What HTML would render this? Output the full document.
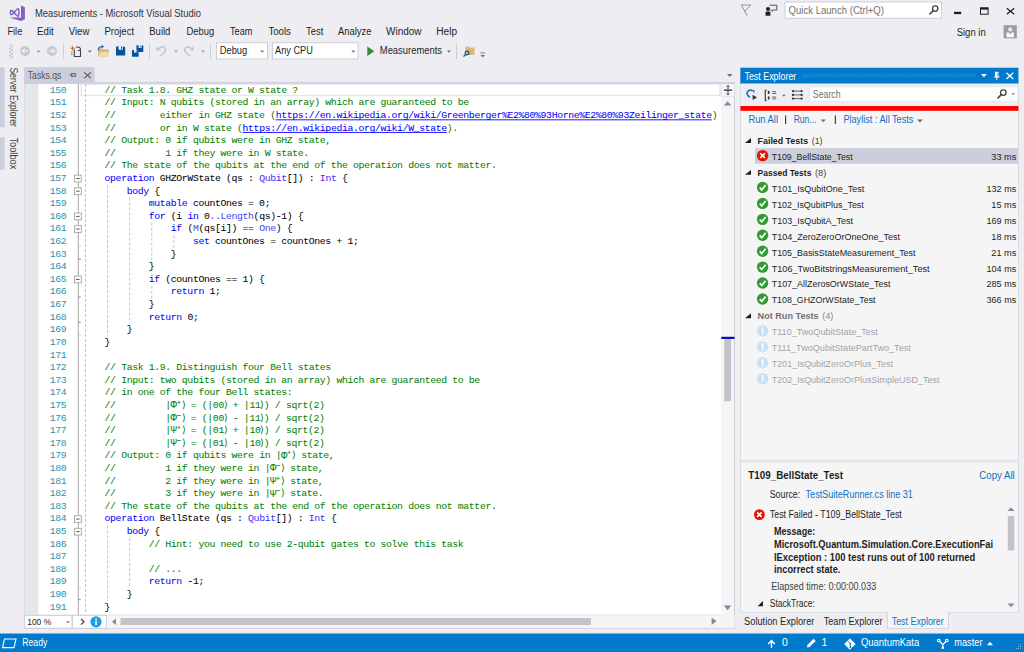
<!DOCTYPE html>
<html><head><meta charset="utf-8"><title>Measurements - Microsoft Visual Studio</title>
<style>
html,body{margin:0;padding:0;width:1024px;height:652px;overflow:hidden;background:#eeeef2;}
svg{position:absolute;left:0;top:0;display:block;font-family:"Liberation Sans",sans-serif;}
</style></head><body>
<svg width="1024" height="652" viewBox="0 0 1024 652">
<path d="M21,5.4 L24.9,7.2 L24.9,19.2 L21,20.9 Z" fill="#865fc5"/>
<path d="M9.4,17.4 L21,17.6 L21,20.9 Z" fill="#865fc5"/>
<path d="M14,12.5 C12.4,10.6 11.3,9.9 10.8,10.4 C10.2,11 10.2,14 10.8,14.6 C11.3,15.1 12.4,14.4 14,12.5 C15.9,10.2 17.3,8.5 18.3,8.8 C19.1,9.1 19.1,15.9 18.3,16.2 C17.3,16.5 15.9,14.8 14,12.5 Z" fill="none" stroke="#865fc5" stroke-width="1.45"/>
<text x="35" y="17.1" font-size="10.15" fill="#333333" textLength="166" lengthAdjust="spacingAndGlyphs">Measurements - Microsoft Visual Studio</text>
<path d="M741.2,5 L751,5 M741.6,5.2 L747,15.6 M750.8,5.2 L744.6,11.4" fill="none" stroke="#8a8a8a" stroke-width="0.9"/>
<g fill="#1e1e1e"><circle cx="768" cy="9" r="2"/><path d="M765.6,15.8 L765.6,12.6 Q765.6,11.4 767,11.4 L769,11.4 Q770.4,11.4 770.4,12.6 L770.4,15.8 Z"/></g>
<path d="M769.6,5.2 L776.8,5.2 L776.8,10 L773.6,10 L772.2,11.4 L772.2,10 L770.4,10" fill="none" stroke="#444444" stroke-width="0.9"/>
<rect x="785" y="2" width="156.4" height="16.3" fill="#ffffff" stroke="#cccedb" stroke-width="1"/>
<text x="788.5" y="13.9" font-size="10.04" fill="#717171" textLength="95.5" lengthAdjust="spacingAndGlyphs">Quick Launch (Ctrl+Q)</text>
<circle cx="935.2" cy="8.6" r="2.7" fill="none" stroke="#424242" stroke-width="1.3"/>
<line x1="933.3" y1="10.6" x2="929.9" y2="14" stroke="#424242" stroke-width="1.6" stroke-linecap="round"/>
<rect x="954" y="11.8" width="7.2" height="2.3" fill="#1e1e1e"/>
<rect x="980.5" y="7.8" width="7.6" height="6.4" fill="none" stroke="#1e1e1e" stroke-width="1"/>
<rect x="980.5" y="7.8" width="7.6" height="1.8" fill="#1e1e1e"/>
<line x1="1006.8" y1="8.2" x2="1014.2" y2="14.2" stroke="#1e1e1e" stroke-width="1.2"/>
<line x1="1014.2" y1="8.2" x2="1006.8" y2="14.2" stroke="#1e1e1e" stroke-width="1.2"/>
<text x="7.4" y="35.3" font-size="10.04" fill="#1e1e1e" textLength="14.9" lengthAdjust="spacingAndGlyphs">File</text>
<text x="37.1" y="35.3" font-size="10.04" fill="#1e1e1e" textLength="16.7" lengthAdjust="spacingAndGlyphs">Edit</text>
<text x="68.7" y="35.3" font-size="10.04" fill="#1e1e1e" textLength="20.7" lengthAdjust="spacingAndGlyphs">View</text>
<text x="104.4" y="35.3" font-size="10.04" fill="#1e1e1e" textLength="29.7" lengthAdjust="spacingAndGlyphs">Project</text>
<text x="149.3" y="35.3" font-size="10.04" fill="#1e1e1e" textLength="21.1" lengthAdjust="spacingAndGlyphs">Build</text>
<text x="186.4" y="35.3" font-size="10.04" fill="#1e1e1e" textLength="27.8" lengthAdjust="spacingAndGlyphs">Debug</text>
<text x="230.0" y="35.3" font-size="10.04" fill="#1e1e1e" textLength="22.5" lengthAdjust="spacingAndGlyphs">Team</text>
<text x="268.4" y="35.3" font-size="10.04" fill="#1e1e1e" textLength="22.5" lengthAdjust="spacingAndGlyphs">Tools</text>
<text x="306.0" y="35.3" font-size="10.04" fill="#1e1e1e" textLength="17.25" lengthAdjust="spacingAndGlyphs">Test</text>
<text x="338.0" y="35.3" font-size="10.04" fill="#1e1e1e" textLength="33.5" lengthAdjust="spacingAndGlyphs">Analyze</text>
<text x="386.0" y="35.3" font-size="10.04" fill="#1e1e1e" textLength="35.5" lengthAdjust="spacingAndGlyphs">Window</text>
<text x="436.25" y="35.3" font-size="10.04" fill="#1e1e1e" textLength="20.75" lengthAdjust="spacingAndGlyphs">Help</text>
<text x="956.7" y="35.9" font-size="10.04" fill="#1e1e1e" textLength="29" lengthAdjust="spacingAndGlyphs">Sign in</text>
<rect x="1003.6" y="25.2" width="13.2" height="13.2" fill="#9d9d9d"/>
<circle cx="1010.2" cy="29.4" r="2.1" fill="#e8e8e8"/>
<path d="M1006.6,37.3 L1006.6,32.6 L1008.7,32.6 L1010.2,34.5 L1011.7,32.6 L1013.8,32.6 L1013.8,37.3 Z" fill="#ffffff"/>
<rect x="9.5" y="44.5" width="1" height="1" fill="#999999"/>
<rect x="11.5" y="45.4" width="1" height="1" fill="#bbbbbb"/>
<rect x="11.5" y="46.3" width="1" height="1" fill="#999999"/>
<rect x="9.5" y="47.199999999999996" width="1" height="1" fill="#bbbbbb"/>
<rect x="9.5" y="48.1" width="1" height="1" fill="#999999"/>
<rect x="11.5" y="49.0" width="1" height="1" fill="#bbbbbb"/>
<rect x="11.5" y="49.9" width="1" height="1" fill="#999999"/>
<rect x="9.5" y="50.8" width="1" height="1" fill="#bbbbbb"/>
<rect x="9.5" y="51.7" width="1" height="1" fill="#999999"/>
<rect x="11.5" y="52.6" width="1" height="1" fill="#bbbbbb"/>
<rect x="11.5" y="53.5" width="1" height="1" fill="#999999"/>
<rect x="9.5" y="54.4" width="1" height="1" fill="#bbbbbb"/>
<rect x="9.5" y="55.3" width="1" height="1" fill="#999999"/>
<rect x="11.5" y="56.2" width="1" height="1" fill="#bbbbbb"/>
<rect x="11.5" y="57.1" width="1" height="1" fill="#999999"/>
<rect x="9.5" y="58.0" width="1" height="1" fill="#bbbbbb"/>
<circle cx="25" cy="51" r="4.9" fill="#c8c8c8"/>
<circle cx="52" cy="51" r="4.9" fill="#c8c8c8"/>
<path d="M28,51 L22.3,51 M24.6,48.7 L22.3,51 L24.6,53.3" fill="none" stroke="#eeeef2" stroke-width="1.3"/>
<path d="M49,51 L54.7,51 M52.4,48.7 L54.7,51 L52.4,53.3" fill="none" stroke="#eeeef2" stroke-width="1.3"/>
<path d="M36.5,50.6 L40.5,50.6 L38.5,52.800000000000004 Z" fill="#999999"/>
<line x1="63.5" y1="44" x2="63.5" y2="59" stroke="#cccedb" stroke-width="1"/>
<path d="M74.3,49.5 L74.3,56.5 L80.5,56.5 L80.5,50.5" fill="none" stroke="#424242" stroke-width="1.1"/>
<path d="M76,47.3 Q80.8,46.2 80.5,50.5 L77.8,50.5" fill="#f0f0f0" stroke="#424242" stroke-width="1.1"/>
<path d="M72.6,45.4 L73.4,47.4 L75.2,48.2 L73.4,49 L72.6,50.9 L71.8,49 L70,48.2 L71.8,47.4 Z" fill="#c27d1a"/>
<rect x="71.4" y="51.5" width="0.9" height="1.3" fill="#424242"/>
<rect x="71.4" y="53.8" width="0.9" height="1.3" fill="#424242"/>
<path d="M87.8,50.6 L91.8,50.6 L89.8,52.800000000000004 Z" fill="#717171"/>
<path d="M98,48.2 L101.5,48.2 L102.5,49.2 L108.8,49.2 L108.8,56.8 L98,56.8 Z" fill="#dcb67a"/>
<path d="M98.2,56.8 L100.2,52 L108.8,52 L108.8,56.8 Z" fill="#f0dcb4"/>
<path d="M98.3,50.3 Q98.3,46.8 102,46.6" fill="none" stroke="#1e72c4" stroke-width="1.4"/>
<path d="M101.6,44.8 L104.2,46.6 L101.6,48.4 Z" fill="#1e72c4"/>
<path d="M116,46.4 L124,46.4 L125.2,47.6 L125.2,55.6 L116,55.6 Z" fill="#00539c"/>
<rect x="118.6" y="46.4" width="4.3" height="3.2" fill="#ffffff"/>
<rect x="121" y="46.9" width="1.2" height="2.1" fill="#00539c"/>
<path d="M136.5,45.2 L142.3,45.2 L143.3,46.2 L143.3,52 L136.5,52 Z" fill="#00539c"/>
<rect x="138.6" y="45.2" width="3.2" height="2.6" fill="#ffffff"/>
<rect x="140.4" y="45.6" width="0.9" height="1.8" fill="#00539c"/>
<path d="M132,50 L137.6,50 L138.6,51 L138.6,56.8 L132,56.8 Z" fill="#00539c"/>
<rect x="134" y="50" width="3.2" height="2.6" fill="#ffffff"/>
<rect x="135.8" y="50.4" width="0.9" height="1.8" fill="#00539c"/>
<line x1="149.5" y1="44" x2="149.5" y2="59" stroke="#cccedb" stroke-width="1"/>
<path d="M158.8,48.6 Q162.5,45.2 165,48.2 Q166.4,50.5 164.2,52.8 L160,56" fill="none" stroke="#c6c6c6" stroke-width="1.5"/>
<path d="M156.4,46.2 L160.9,50.6 L156.4,50.6 Z" fill="#c6c6c6"/>
<path d="M174,50.6 L178,50.6 L176.0,52.800000000000004 Z" fill="#a8a8a8"/>
<path d="M191.4,48.6 Q187.7,45.2 185.2,48.2 Q183.8,50.5 186,52.8 L190.2,56" fill="none" stroke="#c6c6c6" stroke-width="1.5"/>
<path d="M193.8,46.2 L189.3,50.6 L193.8,50.6 Z" fill="#c6c6c6"/>
<path d="M201,50.6 L205,50.6 L203.0,52.800000000000004 Z" fill="#a8a8a8"/>
<line x1="210.5" y1="44" x2="210.5" y2="59" stroke="#cccedb" stroke-width="1"/>
<rect x="216.5" y="42.7" width="51" height="16.3" fill="#ffffff" stroke="#cccedb" stroke-width="1"/>
<text x="219.7" y="54.4" font-size="10.04" fill="#1e1e1e" textLength="27.6" lengthAdjust="spacingAndGlyphs">Debug</text>
<path d="M260.2,50.6 L264.2,50.6 L262.2,52.800000000000004 Z" fill="#717171"/>
<rect x="272.5" y="42.7" width="85.5" height="16.3" fill="#ffffff" stroke="#cccedb" stroke-width="1"/>
<text x="275.1" y="54.4" font-size="10.04" fill="#1e1e1e" textLength="37.7" lengthAdjust="spacingAndGlyphs">Any CPU</text>
<path d="M351.3,50.6 L355.3,50.6 L353.3,52.800000000000004 Z" fill="#717171"/>
<path d="M367.3,46.5 L374.3,51.2 L367.3,55.9 Z" fill="#388a34"/>
<text x="379.8" y="54.4" font-size="10.04" fill="#1e1e1e" textLength="62.2" lengthAdjust="spacingAndGlyphs">Measurements</text>
<path d="M447,50.6 L451,50.6 L449.0,52.800000000000004 Z" fill="#717171"/>
<line x1="456.5" y1="44" x2="456.5" y2="59" stroke="#cccedb" stroke-width="1"/>
<path d="M465.5,46.5 L469,46.5 L470,47.5 L474.5,47.5 L474.5,55 L465.5,55 Z" fill="#dcb67a"/>
<circle cx="467" cy="53" r="1.9" fill="none" stroke="#00539c" stroke-width="1.1"/>
<line x1="465.6" y1="54.5" x2="463.5" y2="56.6" stroke="#00539c" stroke-width="1.3"/>
<line x1="480.5" y1="52.9" x2="485" y2="52.9" stroke="#717171" stroke-width="0.9"/>
<path d="M480.5,55 L485.0,55 L482.75,57.5 Z" fill="#717171"/>
<rect x="0" y="67.4" width="4.7" height="59.8" fill="#cccedb"/>
<rect x="0" y="137.3" width="4.7" height="32.3" fill="#cccedb"/>
<text transform="translate(10.2,67.4) rotate(90)" font-size="10" fill="#444444" textLength="59.5" lengthAdjust="spacingAndGlyphs">Server Explorer</text>
<text transform="translate(10.2,137.4) rotate(90)" font-size="10" fill="#444444" textLength="32" lengthAdjust="spacingAndGlyphs">Toolbox</text>
<rect x="24.1" y="67.1" width="70.5" height="17" fill="#cccedb"/>
<rect x="24.1" y="82" width="711" height="2" fill="#cccedb"/>
<text x="27.8" y="78.6" font-size="10.04" fill="#555555" textLength="33.6" lengthAdjust="spacingAndGlyphs">Tasks.qs</text>
<path d="M69.2,75 L71.5,75 M71.7,72.9 L71.7,77.1 M71.7,73.7 L75.6,73.7 L75.6,76.3 L71.7,76.3" fill="none" stroke="#555555" stroke-width="0.9"/>
<line x1="84.2" y1="72.4" x2="90.9" y2="78.2" stroke="#555555" stroke-width="1.1"/>
<line x1="90.9" y1="72.4" x2="84.2" y2="78.2" stroke="#555555" stroke-width="1.1"/>
<path d="M727,73.9 L732.5,73.9 L729.75,76.9 Z" fill="#717171"/>
<rect x="24.1" y="84" width="710.9" height="544.4" fill="#ffffff"/>
<rect x="24.1" y="84" width="14.4" height="531" fill="#e6e7e8"/>
<rect x="24.1" y="84" width="0.9" height="531" fill="#d6d7e1"/>
<rect x="81.2" y="84.2" width="638.8" height="11.3" fill="none" stroke="#e5e5ea" stroke-width="1.4"/>
<line x1="78.3" y1="84" x2="78.3" y2="615" stroke="#a5a5a5" stroke-width="1"/>
<line x1="85.5" y1="84.0" x2="85.5" y2="613.62" stroke="#c4c4c4" stroke-width="1" stroke-dasharray="3,2"/>
<line x1="107.58" y1="184.88" x2="107.58" y2="336.2" stroke="#c4c4c4" stroke-width="1" stroke-dasharray="3,2"/>
<line x1="129.66" y1="197.49" x2="129.66" y2="323.59000000000003" stroke="#c4c4c4" stroke-width="1" stroke-dasharray="3,2"/>
<line x1="151.74" y1="222.70999999999998" x2="151.74" y2="260.54" stroke="#c4c4c4" stroke-width="1" stroke-dasharray="3,2"/>
<line x1="173.82" y1="235.32" x2="173.82" y2="247.93" stroke="#c4c4c4" stroke-width="1" stroke-dasharray="3,2"/>
<line x1="151.74" y1="285.76" x2="151.74" y2="298.37" stroke="#c4c4c4" stroke-width="1" stroke-dasharray="3,2"/>
<line x1="107.58" y1="525.3499999999999" x2="107.58" y2="601.01" stroke="#c4c4c4" stroke-width="1" stroke-dasharray="3,2"/>
<line x1="129.66" y1="537.9599999999999" x2="129.66" y2="588.4" stroke="#c4c4c4" stroke-width="1" stroke-dasharray="3,2"/>
<rect x="74.5" y="175.175" width="6.8" height="6.8" fill="#ffffff" stroke="#a5a5a5" stroke-width="0.9"/>
<line x1="76.2" y1="178.57500000000002" x2="79.6" y2="178.57500000000002" stroke="#424242" stroke-width="0.9"/>
<rect x="74.5" y="187.785" width="6.8" height="6.8" fill="#ffffff" stroke="#a5a5a5" stroke-width="0.9"/>
<line x1="76.2" y1="191.185" x2="79.6" y2="191.185" stroke="#424242" stroke-width="0.9"/>
<rect x="74.5" y="213.00500000000002" width="6.8" height="6.8" fill="#ffffff" stroke="#a5a5a5" stroke-width="0.9"/>
<line x1="76.2" y1="216.40500000000003" x2="79.6" y2="216.40500000000003" stroke="#424242" stroke-width="0.9"/>
<rect x="74.5" y="225.61499999999998" width="6.8" height="6.8" fill="#ffffff" stroke="#a5a5a5" stroke-width="0.9"/>
<line x1="76.2" y1="229.015" x2="79.6" y2="229.015" stroke="#424242" stroke-width="0.9"/>
<rect x="74.5" y="276.055" width="6.8" height="6.8" fill="#ffffff" stroke="#a5a5a5" stroke-width="0.9"/>
<line x1="76.2" y1="279.455" x2="79.6" y2="279.455" stroke="#424242" stroke-width="0.9"/>
<rect x="74.5" y="515.645" width="6.8" height="6.8" fill="#ffffff" stroke="#a5a5a5" stroke-width="0.9"/>
<line x1="76.2" y1="519.045" x2="79.6" y2="519.045" stroke="#424242" stroke-width="0.9"/>
<rect x="74.5" y="528.2549999999999" width="6.8" height="6.8" fill="#ffffff" stroke="#a5a5a5" stroke-width="0.9"/>
<line x1="76.2" y1="531.6549999999999" x2="79.6" y2="531.6549999999999" stroke="#424242" stroke-width="0.9"/>
<line x1="78.3" y1="246.63" x2="80.8" y2="246.63" stroke="#c8c8c8" stroke-width="1"/>
<line x1="78.3" y1="259.24" x2="80.8" y2="259.24" stroke="#888888" stroke-width="1"/>
<line x1="78.3" y1="297.07" x2="80.8" y2="297.07" stroke="#888888" stroke-width="1"/>
<line x1="78.3" y1="322.28999999999996" x2="80.8" y2="322.28999999999996" stroke="#888888" stroke-width="1"/>
<line x1="78.3" y1="334.9" x2="80.8" y2="334.9" stroke="#c8c8c8" stroke-width="1"/>
<line x1="78.3" y1="587.1" x2="80.8" y2="587.1" stroke="#c8c8c8" stroke-width="1"/>
<line x1="78.3" y1="599.71" x2="80.8" y2="599.71" stroke="#888888" stroke-width="1"/>
<g font-family="Liberation Mono" font-size="9.8" letter-spacing="-0.360" fill="#2b91af">
<text x="49.84" y="92.70">150</text>
<text x="49.84" y="105.31">151</text>
<text x="49.84" y="117.92">152</text>
<text x="49.84" y="130.53">153</text>
<text x="49.84" y="143.14">154</text>
<text x="49.84" y="155.75">155</text>
<text x="49.84" y="168.36">156</text>
<text x="49.84" y="180.97">157</text>
<text x="49.84" y="193.58">158</text>
<text x="49.84" y="206.19">159</text>
<text x="49.84" y="218.80">160</text>
<text x="49.84" y="231.41">161</text>
<text x="49.84" y="244.02">162</text>
<text x="49.84" y="256.63">163</text>
<text x="49.84" y="269.24">164</text>
<text x="49.84" y="281.85">165</text>
<text x="49.84" y="294.46">166</text>
<text x="49.84" y="307.07">167</text>
<text x="49.84" y="319.68">168</text>
<text x="49.84" y="332.29">169</text>
<text x="49.84" y="344.90">170</text>
<text x="49.84" y="357.51">171</text>
<text x="49.84" y="370.12">172</text>
<text x="49.84" y="382.73">173</text>
<text x="49.84" y="395.34">174</text>
<text x="49.84" y="407.95">175</text>
<text x="49.84" y="420.56">176</text>
<text x="49.84" y="433.17">177</text>
<text x="49.84" y="445.78">178</text>
<text x="49.84" y="458.39">179</text>
<text x="49.84" y="471.00">180</text>
<text x="49.84" y="483.61">181</text>
<text x="49.84" y="496.22">182</text>
<text x="49.84" y="508.83">183</text>
<text x="49.84" y="521.44">184</text>
<text x="49.84" y="534.05">185</text>
<text x="49.84" y="546.66">186</text>
<text x="49.84" y="559.27">187</text>
<text x="49.84" y="571.88">188</text>
<text x="49.84" y="584.49">189</text>
<text x="49.84" y="597.10">190</text>
<text x="49.84" y="609.71">191</text>
</g>
<g font-family="Liberation Mono" font-size="9.8" letter-spacing="-0.360" stroke-width="0.04" style="paint-order:stroke">
<text y="92.70"><tspan x="104.58" fill="#008000" stroke="#008000" xml:space="preserve">// Task 1.8. GHZ state or W state ?</tspan></text>
<text y="105.31"><tspan x="104.58" fill="#008000" stroke="#008000" xml:space="preserve">// Input: N qubits (stored in an array) which are guaranteed to be</tspan></text>
<text y="117.92"><tspan x="104.58" fill="#008000" stroke="#008000" xml:space="preserve">//        either in GHZ state (</tspan><tspan x="275.70" fill="#0000ff" stroke="#0000ff" xml:space="preserve">https://en.wikipedia.org/wiki/Greenberger%E2%80%93Horne%E2%80%93Zeilinger_state</tspan><tspan x="711.78" fill="#008000" stroke="#008000" xml:space="preserve">)</tspan></text>
<text y="130.53"><tspan x="104.58" fill="#008000" stroke="#008000" xml:space="preserve">//        or in W state (</tspan><tspan x="242.58" fill="#0000ff" stroke="#0000ff" xml:space="preserve">https://en.wikipedia.org/wiki/W_state</tspan><tspan x="446.82" fill="#008000" stroke="#008000" xml:space="preserve">).</tspan></text>
<text y="143.14"><tspan x="104.58" fill="#008000" stroke="#008000" xml:space="preserve">// Output: 0 if qubits were in GHZ state,</tspan></text>
<text y="155.75"><tspan x="104.58" fill="#008000" stroke="#008000" xml:space="preserve">//         1 if they were in W state.</tspan></text>
<text y="168.36"><tspan x="104.58" fill="#008000" stroke="#008000" xml:space="preserve">// The state of the qubits at the end of the operation does not matter.</tspan></text>
<text y="180.97"><tspan x="104.58" fill="#0000ff" stroke="#0000ff" xml:space="preserve">operation</tspan><tspan x="159.78" fill="#000000" stroke="#000000" xml:space="preserve">GHZOrWState (qs : </tspan><tspan x="259.14" fill="#4a2ef5" stroke="#4a2ef5" xml:space="preserve">Qubit</tspan><tspan x="286.74" fill="#000000" stroke="#000000" xml:space="preserve">[]) : </tspan><tspan x="319.86" fill="#4a2ef5" stroke="#4a2ef5" xml:space="preserve">Int</tspan><tspan x="341.94" fill="#000000" stroke="#000000" xml:space="preserve">{</tspan></text>
<text y="193.58"><tspan x="126.66" fill="#0000ff" stroke="#0000ff" xml:space="preserve">body</tspan><tspan x="154.26" fill="#000000" stroke="#000000" xml:space="preserve">{</tspan></text>
<text y="206.19"><tspan x="148.74" fill="#0000ff" stroke="#0000ff" xml:space="preserve">mutable</tspan><tspan x="192.90" fill="#000000" stroke="#000000" xml:space="preserve">countOnes = 0;</tspan></text>
<text y="218.80"><tspan x="148.74" fill="#0000ff" stroke="#0000ff" xml:space="preserve">for</tspan><tspan x="170.82" fill="#000000" stroke="#000000" xml:space="preserve">(i </tspan><tspan x="187.38" fill="#0000ff" stroke="#0000ff" xml:space="preserve">in</tspan><tspan x="203.94" fill="#000000" stroke="#000000" xml:space="preserve">0</tspan><tspan x="209.46" fill="#4545f0" stroke="#4545f0" xml:space="preserve">..</tspan><tspan x="220.50" fill="#4545f0" stroke="#4545f0" xml:space="preserve">Length</tspan><tspan x="253.62" fill="#000000" stroke="#000000" xml:space="preserve">(qs)-1) {</tspan></text>
<text y="231.41"><tspan x="170.82" fill="#0000ff" stroke="#0000ff" xml:space="preserve">if</tspan><tspan x="187.38" fill="#000000" stroke="#000000" xml:space="preserve">(</tspan><tspan x="192.90" fill="#4545f0" stroke="#4545f0" xml:space="preserve">M</tspan><tspan x="198.42" fill="#000000" stroke="#000000" xml:space="preserve">(qs[i]) == </tspan><tspan x="259.14" fill="#4545f0" stroke="#4545f0" xml:space="preserve">One</tspan><tspan x="275.70" fill="#000000" stroke="#000000" xml:space="preserve">) {</tspan></text>
<text y="244.02"><tspan x="192.90" fill="#0000ff" stroke="#0000ff" xml:space="preserve">set</tspan><tspan x="214.98" fill="#000000" stroke="#000000" xml:space="preserve">countOnes = countOnes + 1;</tspan></text>
<text y="256.63"><tspan x="170.82" fill="#000000" stroke="#000000" xml:space="preserve">}</tspan></text>
<text y="269.24"><tspan x="148.74" fill="#000000" stroke="#000000" xml:space="preserve">}</tspan></text>
<text y="281.85"><tspan x="148.74" fill="#0000ff" stroke="#0000ff" xml:space="preserve">if</tspan><tspan x="165.30" fill="#000000" stroke="#000000" xml:space="preserve">(countOnes == 1) {</tspan></text>
<text y="294.46"><tspan x="170.82" fill="#0000ff" stroke="#0000ff" xml:space="preserve">return</tspan><tspan x="209.46" fill="#000000" stroke="#000000" xml:space="preserve">1;</tspan></text>
<text y="307.07"><tspan x="148.74" fill="#000000" stroke="#000000" xml:space="preserve">}</tspan></text>
<text y="319.68"><tspan x="148.74" fill="#0000ff" stroke="#0000ff" xml:space="preserve">return</tspan><tspan x="187.38" fill="#000000" stroke="#000000" xml:space="preserve">0;</tspan></text>
<text y="332.29"><tspan x="126.66" fill="#000000" stroke="#000000" xml:space="preserve">}</tspan></text>
<text y="344.90"><tspan x="104.58" fill="#000000" stroke="#000000" xml:space="preserve">}</tspan></text>
<text y="357.51"></text>
<text y="370.12"><tspan x="104.58" fill="#008000" stroke="#008000" xml:space="preserve">// Task 1.9. Distinguish four Bell states</tspan></text>
<text y="382.73"><tspan x="104.58" fill="#008000" stroke="#008000" xml:space="preserve">// Input: two qubits (stored in an array) which are guaranteed to be</tspan></text>
<text y="395.34"><tspan x="104.58" fill="#008000" stroke="#008000" xml:space="preserve">// in one of the four Bell states:</tspan></text>
<text y="407.95"><tspan x="104.58" y="407.95" fill="#008000" stroke="#008000">/</tspan><tspan x="110.10" y="407.95" fill="#008000" stroke="#008000">/</tspan><tspan x="165.30" y="407.95" fill="#008000" stroke="#008000">|</tspan><tspan x="170.62" y="408.25" font-size="10.6" fill="#008000" stroke="#008000">Φ</tspan><tspan x="176.64" y="404.95" font-size="7.2" fill="#008000" stroke="#008000">+</tspan><tspan x="181.86" y="407.95" fill="#008000" stroke="#008000">⟩</tspan><tspan x="190.78" y="407.95" fill="#008000" stroke="#008000">=</tspan><tspan x="201.82" y="407.95" fill="#008000" stroke="#008000">(</tspan><tspan x="207.34" y="407.95" fill="#008000" stroke="#008000">|</tspan><tspan x="212.86" y="407.95" fill="#008000" stroke="#008000">0</tspan><tspan x="218.38" y="407.95" fill="#008000" stroke="#008000">0</tspan><tspan x="223.90" y="407.95" fill="#008000" stroke="#008000">⟩</tspan><tspan x="232.82" y="407.95" fill="#008000" stroke="#008000">+</tspan><tspan x="243.86" y="407.95" fill="#008000" stroke="#008000">|</tspan><tspan x="249.38" y="407.95" fill="#008000" stroke="#008000">1</tspan><tspan x="254.90" y="407.95" fill="#008000" stroke="#008000">1</tspan><tspan x="260.42" y="407.95" fill="#008000" stroke="#008000">⟩</tspan><tspan x="263.82" y="407.95" fill="#008000" stroke="#008000">)</tspan><tspan x="274.86" y="407.95" fill="#008000" stroke="#008000">/</tspan><tspan x="285.90" y="407.95" fill="#008000" stroke="#008000">s</tspan><tspan x="291.42" y="407.95" fill="#008000" stroke="#008000">q</tspan><tspan x="296.94" y="407.95" fill="#008000" stroke="#008000">r</tspan><tspan x="302.46" y="407.95" fill="#008000" stroke="#008000">t</tspan><tspan x="307.98" y="407.95" fill="#008000" stroke="#008000">(</tspan><tspan x="313.50" y="407.95" fill="#008000" stroke="#008000">2</tspan><tspan x="319.02" y="407.95" fill="#008000" stroke="#008000">)</tspan></text>
<text y="420.56"><tspan x="104.58" y="420.56" fill="#008000" stroke="#008000">/</tspan><tspan x="110.10" y="420.56" fill="#008000" stroke="#008000">/</tspan><tspan x="165.30" y="420.56" fill="#008000" stroke="#008000">|</tspan><tspan x="170.62" y="420.86" font-size="10.6" fill="#008000" stroke="#008000">Φ</tspan><tspan x="176.64" y="417.56" font-size="7.2" fill="#008000" stroke="#008000">−</tspan><tspan x="181.86" y="420.56" fill="#008000" stroke="#008000">⟩</tspan><tspan x="190.78" y="420.56" fill="#008000" stroke="#008000">=</tspan><tspan x="201.82" y="420.56" fill="#008000" stroke="#008000">(</tspan><tspan x="207.34" y="420.56" fill="#008000" stroke="#008000">|</tspan><tspan x="212.86" y="420.56" fill="#008000" stroke="#008000">0</tspan><tspan x="218.38" y="420.56" fill="#008000" stroke="#008000">0</tspan><tspan x="223.90" y="420.56" fill="#008000" stroke="#008000">⟩</tspan><tspan x="232.82" y="420.56" fill="#008000" stroke="#008000">-</tspan><tspan x="243.86" y="420.56" fill="#008000" stroke="#008000">|</tspan><tspan x="249.38" y="420.56" fill="#008000" stroke="#008000">1</tspan><tspan x="254.90" y="420.56" fill="#008000" stroke="#008000">1</tspan><tspan x="260.42" y="420.56" fill="#008000" stroke="#008000">⟩</tspan><tspan x="263.82" y="420.56" fill="#008000" stroke="#008000">)</tspan><tspan x="274.86" y="420.56" fill="#008000" stroke="#008000">/</tspan><tspan x="285.90" y="420.56" fill="#008000" stroke="#008000">s</tspan><tspan x="291.42" y="420.56" fill="#008000" stroke="#008000">q</tspan><tspan x="296.94" y="420.56" fill="#008000" stroke="#008000">r</tspan><tspan x="302.46" y="420.56" fill="#008000" stroke="#008000">t</tspan><tspan x="307.98" y="420.56" fill="#008000" stroke="#008000">(</tspan><tspan x="313.50" y="420.56" fill="#008000" stroke="#008000">2</tspan><tspan x="319.02" y="420.56" fill="#008000" stroke="#008000">)</tspan></text>
<text y="433.17"><tspan x="104.58" y="433.17" fill="#008000" stroke="#008000">/</tspan><tspan x="110.10" y="433.17" fill="#008000" stroke="#008000">/</tspan><tspan x="165.30" y="433.17" fill="#008000" stroke="#008000">|</tspan><tspan x="170.62" y="433.47" font-size="10.6" fill="#008000" stroke="#008000">Ψ</tspan><tspan x="176.64" y="430.17" font-size="7.2" fill="#008000" stroke="#008000">+</tspan><tspan x="181.86" y="433.17" fill="#008000" stroke="#008000">⟩</tspan><tspan x="190.78" y="433.17" fill="#008000" stroke="#008000">=</tspan><tspan x="201.82" y="433.17" fill="#008000" stroke="#008000">(</tspan><tspan x="207.34" y="433.17" fill="#008000" stroke="#008000">|</tspan><tspan x="212.86" y="433.17" fill="#008000" stroke="#008000">0</tspan><tspan x="218.38" y="433.17" fill="#008000" stroke="#008000">1</tspan><tspan x="223.90" y="433.17" fill="#008000" stroke="#008000">⟩</tspan><tspan x="232.82" y="433.17" fill="#008000" stroke="#008000">+</tspan><tspan x="243.86" y="433.17" fill="#008000" stroke="#008000">|</tspan><tspan x="249.38" y="433.17" fill="#008000" stroke="#008000">1</tspan><tspan x="254.90" y="433.17" fill="#008000" stroke="#008000">0</tspan><tspan x="260.42" y="433.17" fill="#008000" stroke="#008000">⟩</tspan><tspan x="263.82" y="433.17" fill="#008000" stroke="#008000">)</tspan><tspan x="274.86" y="433.17" fill="#008000" stroke="#008000">/</tspan><tspan x="285.90" y="433.17" fill="#008000" stroke="#008000">s</tspan><tspan x="291.42" y="433.17" fill="#008000" stroke="#008000">q</tspan><tspan x="296.94" y="433.17" fill="#008000" stroke="#008000">r</tspan><tspan x="302.46" y="433.17" fill="#008000" stroke="#008000">t</tspan><tspan x="307.98" y="433.17" fill="#008000" stroke="#008000">(</tspan><tspan x="313.50" y="433.17" fill="#008000" stroke="#008000">2</tspan><tspan x="319.02" y="433.17" fill="#008000" stroke="#008000">)</tspan></text>
<text y="445.78"><tspan x="104.58" y="445.78" fill="#008000" stroke="#008000">/</tspan><tspan x="110.10" y="445.78" fill="#008000" stroke="#008000">/</tspan><tspan x="165.30" y="445.78" fill="#008000" stroke="#008000">|</tspan><tspan x="170.62" y="446.08" font-size="10.6" fill="#008000" stroke="#008000">Ψ</tspan><tspan x="176.64" y="442.78" font-size="7.2" fill="#008000" stroke="#008000">−</tspan><tspan x="181.86" y="445.78" fill="#008000" stroke="#008000">⟩</tspan><tspan x="190.78" y="445.78" fill="#008000" stroke="#008000">=</tspan><tspan x="201.82" y="445.78" fill="#008000" stroke="#008000">(</tspan><tspan x="207.34" y="445.78" fill="#008000" stroke="#008000">|</tspan><tspan x="212.86" y="445.78" fill="#008000" stroke="#008000">0</tspan><tspan x="218.38" y="445.78" fill="#008000" stroke="#008000">1</tspan><tspan x="223.90" y="445.78" fill="#008000" stroke="#008000">⟩</tspan><tspan x="232.82" y="445.78" fill="#008000" stroke="#008000">-</tspan><tspan x="243.86" y="445.78" fill="#008000" stroke="#008000">|</tspan><tspan x="249.38" y="445.78" fill="#008000" stroke="#008000">1</tspan><tspan x="254.90" y="445.78" fill="#008000" stroke="#008000">0</tspan><tspan x="260.42" y="445.78" fill="#008000" stroke="#008000">⟩</tspan><tspan x="263.82" y="445.78" fill="#008000" stroke="#008000">)</tspan><tspan x="274.86" y="445.78" fill="#008000" stroke="#008000">/</tspan><tspan x="285.90" y="445.78" fill="#008000" stroke="#008000">s</tspan><tspan x="291.42" y="445.78" fill="#008000" stroke="#008000">q</tspan><tspan x="296.94" y="445.78" fill="#008000" stroke="#008000">r</tspan><tspan x="302.46" y="445.78" fill="#008000" stroke="#008000">t</tspan><tspan x="307.98" y="445.78" fill="#008000" stroke="#008000">(</tspan><tspan x="313.50" y="445.78" fill="#008000" stroke="#008000">2</tspan><tspan x="319.02" y="445.78" fill="#008000" stroke="#008000">)</tspan></text>
<text y="458.39"><tspan x="104.58" y="458.39" fill="#008000" stroke="#008000">/</tspan><tspan x="110.10" y="458.39" fill="#008000" stroke="#008000">/</tspan><tspan x="121.14" y="458.39" fill="#008000" stroke="#008000">O</tspan><tspan x="126.66" y="458.39" fill="#008000" stroke="#008000">u</tspan><tspan x="132.18" y="458.39" fill="#008000" stroke="#008000">t</tspan><tspan x="137.70" y="458.39" fill="#008000" stroke="#008000">p</tspan><tspan x="143.22" y="458.39" fill="#008000" stroke="#008000">u</tspan><tspan x="148.74" y="458.39" fill="#008000" stroke="#008000">t</tspan><tspan x="154.26" y="458.39" fill="#008000" stroke="#008000">:</tspan><tspan x="165.30" y="458.39" fill="#008000" stroke="#008000">0</tspan><tspan x="176.34" y="458.39" fill="#008000" stroke="#008000">i</tspan><tspan x="181.86" y="458.39" fill="#008000" stroke="#008000">f</tspan><tspan x="192.90" y="458.39" fill="#008000" stroke="#008000">q</tspan><tspan x="198.42" y="458.39" fill="#008000" stroke="#008000">u</tspan><tspan x="203.94" y="458.39" fill="#008000" stroke="#008000">b</tspan><tspan x="209.46" y="458.39" fill="#008000" stroke="#008000">i</tspan><tspan x="214.98" y="458.39" fill="#008000" stroke="#008000">t</tspan><tspan x="220.50" y="458.39" fill="#008000" stroke="#008000">s</tspan><tspan x="231.54" y="458.39" fill="#008000" stroke="#008000">w</tspan><tspan x="237.06" y="458.39" fill="#008000" stroke="#008000">e</tspan><tspan x="242.58" y="458.39" fill="#008000" stroke="#008000">r</tspan><tspan x="248.10" y="458.39" fill="#008000" stroke="#008000">e</tspan><tspan x="259.14" y="458.39" fill="#008000" stroke="#008000">i</tspan><tspan x="264.66" y="458.39" fill="#008000" stroke="#008000">n</tspan><tspan x="275.70" y="458.39" fill="#008000" stroke="#008000">|</tspan><tspan x="281.02" y="458.69" font-size="10.6" fill="#008000" stroke="#008000">Φ</tspan><tspan x="287.04" y="455.39" font-size="7.2" fill="#008000" stroke="#008000">+</tspan><tspan x="292.26" y="458.39" fill="#008000" stroke="#008000">⟩</tspan><tspan x="301.18" y="458.39" fill="#008000" stroke="#008000">s</tspan><tspan x="306.70" y="458.39" fill="#008000" stroke="#008000">t</tspan><tspan x="312.22" y="458.39" fill="#008000" stroke="#008000">a</tspan><tspan x="317.74" y="458.39" fill="#008000" stroke="#008000">t</tspan><tspan x="323.26" y="458.39" fill="#008000" stroke="#008000">e</tspan><tspan x="328.78" y="458.39" fill="#008000" stroke="#008000">,</tspan></text>
<text y="471.00"><tspan x="104.58" y="471.00" fill="#008000" stroke="#008000">/</tspan><tspan x="110.10" y="471.00" fill="#008000" stroke="#008000">/</tspan><tspan x="165.30" y="471.00" fill="#008000" stroke="#008000">1</tspan><tspan x="176.34" y="471.00" fill="#008000" stroke="#008000">i</tspan><tspan x="181.86" y="471.00" fill="#008000" stroke="#008000">f</tspan><tspan x="192.90" y="471.00" fill="#008000" stroke="#008000">t</tspan><tspan x="198.42" y="471.00" fill="#008000" stroke="#008000">h</tspan><tspan x="203.94" y="471.00" fill="#008000" stroke="#008000">e</tspan><tspan x="209.46" y="471.00" fill="#008000" stroke="#008000">y</tspan><tspan x="220.50" y="471.00" fill="#008000" stroke="#008000">w</tspan><tspan x="226.02" y="471.00" fill="#008000" stroke="#008000">e</tspan><tspan x="231.54" y="471.00" fill="#008000" stroke="#008000">r</tspan><tspan x="237.06" y="471.00" fill="#008000" stroke="#008000">e</tspan><tspan x="248.10" y="471.00" fill="#008000" stroke="#008000">i</tspan><tspan x="253.62" y="471.00" fill="#008000" stroke="#008000">n</tspan><tspan x="264.66" y="471.00" fill="#008000" stroke="#008000">|</tspan><tspan x="269.98" y="471.30" font-size="10.6" fill="#008000" stroke="#008000">Φ</tspan><tspan x="276.00" y="468.00" font-size="7.2" fill="#008000" stroke="#008000">−</tspan><tspan x="281.22" y="471.00" fill="#008000" stroke="#008000">⟩</tspan><tspan x="290.14" y="471.00" fill="#008000" stroke="#008000">s</tspan><tspan x="295.66" y="471.00" fill="#008000" stroke="#008000">t</tspan><tspan x="301.18" y="471.00" fill="#008000" stroke="#008000">a</tspan><tspan x="306.70" y="471.00" fill="#008000" stroke="#008000">t</tspan><tspan x="312.22" y="471.00" fill="#008000" stroke="#008000">e</tspan><tspan x="317.74" y="471.00" fill="#008000" stroke="#008000">,</tspan></text>
<text y="483.61"><tspan x="104.58" y="483.61" fill="#008000" stroke="#008000">/</tspan><tspan x="110.10" y="483.61" fill="#008000" stroke="#008000">/</tspan><tspan x="165.30" y="483.61" fill="#008000" stroke="#008000">2</tspan><tspan x="176.34" y="483.61" fill="#008000" stroke="#008000">i</tspan><tspan x="181.86" y="483.61" fill="#008000" stroke="#008000">f</tspan><tspan x="192.90" y="483.61" fill="#008000" stroke="#008000">t</tspan><tspan x="198.42" y="483.61" fill="#008000" stroke="#008000">h</tspan><tspan x="203.94" y="483.61" fill="#008000" stroke="#008000">e</tspan><tspan x="209.46" y="483.61" fill="#008000" stroke="#008000">y</tspan><tspan x="220.50" y="483.61" fill="#008000" stroke="#008000">w</tspan><tspan x="226.02" y="483.61" fill="#008000" stroke="#008000">e</tspan><tspan x="231.54" y="483.61" fill="#008000" stroke="#008000">r</tspan><tspan x="237.06" y="483.61" fill="#008000" stroke="#008000">e</tspan><tspan x="248.10" y="483.61" fill="#008000" stroke="#008000">i</tspan><tspan x="253.62" y="483.61" fill="#008000" stroke="#008000">n</tspan><tspan x="264.66" y="483.61" fill="#008000" stroke="#008000">|</tspan><tspan x="269.98" y="483.91" font-size="10.6" fill="#008000" stroke="#008000">Ψ</tspan><tspan x="276.00" y="480.61" font-size="7.2" fill="#008000" stroke="#008000">+</tspan><tspan x="281.22" y="483.61" fill="#008000" stroke="#008000">⟩</tspan><tspan x="290.14" y="483.61" fill="#008000" stroke="#008000">s</tspan><tspan x="295.66" y="483.61" fill="#008000" stroke="#008000">t</tspan><tspan x="301.18" y="483.61" fill="#008000" stroke="#008000">a</tspan><tspan x="306.70" y="483.61" fill="#008000" stroke="#008000">t</tspan><tspan x="312.22" y="483.61" fill="#008000" stroke="#008000">e</tspan><tspan x="317.74" y="483.61" fill="#008000" stroke="#008000">,</tspan></text>
<text y="496.22"><tspan x="104.58" y="496.22" fill="#008000" stroke="#008000">/</tspan><tspan x="110.10" y="496.22" fill="#008000" stroke="#008000">/</tspan><tspan x="165.30" y="496.22" fill="#008000" stroke="#008000">3</tspan><tspan x="176.34" y="496.22" fill="#008000" stroke="#008000">i</tspan><tspan x="181.86" y="496.22" fill="#008000" stroke="#008000">f</tspan><tspan x="192.90" y="496.22" fill="#008000" stroke="#008000">t</tspan><tspan x="198.42" y="496.22" fill="#008000" stroke="#008000">h</tspan><tspan x="203.94" y="496.22" fill="#008000" stroke="#008000">e</tspan><tspan x="209.46" y="496.22" fill="#008000" stroke="#008000">y</tspan><tspan x="220.50" y="496.22" fill="#008000" stroke="#008000">w</tspan><tspan x="226.02" y="496.22" fill="#008000" stroke="#008000">e</tspan><tspan x="231.54" y="496.22" fill="#008000" stroke="#008000">r</tspan><tspan x="237.06" y="496.22" fill="#008000" stroke="#008000">e</tspan><tspan x="248.10" y="496.22" fill="#008000" stroke="#008000">i</tspan><tspan x="253.62" y="496.22" fill="#008000" stroke="#008000">n</tspan><tspan x="264.66" y="496.22" fill="#008000" stroke="#008000">|</tspan><tspan x="269.98" y="496.52" font-size="10.6" fill="#008000" stroke="#008000">Ψ</tspan><tspan x="276.00" y="493.22" font-size="7.2" fill="#008000" stroke="#008000">−</tspan><tspan x="281.22" y="496.22" fill="#008000" stroke="#008000">⟩</tspan><tspan x="290.14" y="496.22" fill="#008000" stroke="#008000">s</tspan><tspan x="295.66" y="496.22" fill="#008000" stroke="#008000">t</tspan><tspan x="301.18" y="496.22" fill="#008000" stroke="#008000">a</tspan><tspan x="306.70" y="496.22" fill="#008000" stroke="#008000">t</tspan><tspan x="312.22" y="496.22" fill="#008000" stroke="#008000">e</tspan><tspan x="317.74" y="496.22" fill="#008000" stroke="#008000">.</tspan></text>
<text y="508.83"><tspan x="104.58" fill="#008000" stroke="#008000" xml:space="preserve">// The state of the qubits at the end of the operation does not matter.</tspan></text>
<text y="521.44"><tspan x="104.58" fill="#0000ff" stroke="#0000ff" xml:space="preserve">operation</tspan><tspan x="159.78" fill="#000000" stroke="#000000" xml:space="preserve">BellState (qs : </tspan><tspan x="248.10" fill="#4a2ef5" stroke="#4a2ef5" xml:space="preserve">Qubit</tspan><tspan x="275.70" fill="#000000" stroke="#000000" xml:space="preserve">[]) : </tspan><tspan x="308.82" fill="#4a2ef5" stroke="#4a2ef5" xml:space="preserve">Int</tspan><tspan x="330.90" fill="#000000" stroke="#000000" xml:space="preserve">{</tspan></text>
<text y="534.05"><tspan x="126.66" fill="#0000ff" stroke="#0000ff" xml:space="preserve">body</tspan><tspan x="154.26" fill="#000000" stroke="#000000" xml:space="preserve">{</tspan></text>
<text y="546.66"><tspan x="148.74" fill="#008000" stroke="#008000" xml:space="preserve">// Hint: you need to use 2-qubit gates to solve this task</tspan></text>
<text y="559.27"></text>
<text y="571.88"><tspan x="148.74" fill="#008000" stroke="#008000" xml:space="preserve">// ...</tspan></text>
<text y="584.49"><tspan x="148.74" fill="#0000ff" stroke="#0000ff" xml:space="preserve">return</tspan><tspan x="187.38" fill="#000000" stroke="#000000" xml:space="preserve">-1;</tspan></text>
<text y="597.10"><tspan x="126.66" fill="#000000" stroke="#000000" xml:space="preserve">}</tspan></text>
<text y="609.71"><tspan x="104.58" fill="#000000" stroke="#000000" xml:space="preserve">}</tspan></text>
</g>
<line x1="275.7" y1="119.82000000000001" x2="711.78" y2="119.82000000000001" stroke="#0000ff" stroke-width="0.9"/>
<line x1="242.57999999999998" y1="132.43" x2="446.81999999999994" y2="132.43" stroke="#0000ff" stroke-width="0.9"/>
<rect x="721.2" y="84" width="13.3" height="531" fill="#f5f5f5"/>
<line x1="734.5" y1="84" x2="734.5" y2="628.4" stroke="#cccedb" stroke-width="1"/>
<rect x="721.2" y="84" width="13.3" height="12.4" fill="#f5f5f5" stroke="#e0e0e6" stroke-width="0.8"/>
<line x1="724" y1="90.2" x2="732" y2="90.2" stroke="#424242" stroke-width="1.4"/>
<path d="M728,85.5 L728,95 M726.5,87 L728,85.5 L729.5,87 M726.5,93.5 L728,95 L729.5,93.5" fill="none" stroke="#424242" stroke-width="0.9"/>
<path d="M723.9,105.6 L731.3,105.6 L727.6,101.3 Z" fill="#868999"/>
<path d="M723.9,605.6 L731.3,605.6 L727.6,610.2 Z" fill="#868999"/>
<rect x="724.2" y="339" width="6.9" height="62.2" fill="#c2c3c9"/>
<rect x="721.2" y="336.8" width="13.3" height="2.1" fill="#0000cd"/>
<rect x="24.1" y="615" width="697" height="13.4" fill="#f5f5f5"/>
<line x1="24.1" y1="615" x2="721.2" y2="615" stroke="#e0e0e6" stroke-width="0.8"/>
<rect x="24.6" y="615.4" width="47.3" height="12.8" fill="#ffffff" stroke="#cccedb" stroke-width="0.9"/>
<text x="27.2" y="625.3" font-size="9.72" fill="#1e1e1e" textLength="24" lengthAdjust="spacingAndGlyphs">100 %</text>
<path d="M66.2,621.2 L69.8,621.2 L68.0,623.2 Z" fill="#717171"/>
<rect x="72.6" y="615.4" width="33.8" height="12.8" fill="#ffffff" stroke="#cccedb" stroke-width="0.9"/>
<path d="M81,619 L84,621.8 L81,624.6" fill="none" stroke="#424242" stroke-width="1.2"/>
<circle cx="96" cy="621.8" r="5.6" fill="#1ba1e2"/>
<rect x="95.3" y="620.5" width="1.5" height="4.6" fill="#ffffff"/>
<rect x="95.3" y="618.2" width="1.5" height="1.4" fill="#ffffff"/>
<path d="M116,618.4 L116,625 L112,621.7 Z" fill="#868999"/>
<rect x="120.5" y="618" width="470.5" height="7" fill="#c2c3c9"/>
<path d="M711.6,617.6 L711.6,625 L716.5,621.3 Z" fill="#868999"/>
<rect x="721.2" y="615" width="13.3" height="13.2" fill="#f5f5f5"/>
<rect x="24.1" y="628" width="711" height="0.8" fill="#cccedb"/>
<rect x="740.4" y="67.8" width="278.0" height="544.8000000000001" fill="#f5f5f5" stroke="#d4d5df" stroke-width="0.8"/>
<rect x="740.4" y="67.8" width="278.0" height="15.9" fill="#007acc"/>
<text x="744.5" y="79.8" font-size="10.04" fill="#ffffff" textLength="51.8" lengthAdjust="spacingAndGlyphs">Test Explorer</text>
<g fill="#4aa0dc">
<rect x="802.5" y="73.6" width="1" height="1"/><rect x="804.0" y="75.1" width="1" height="1"/><rect x="802.5" y="76.6" width="1" height="1"/>
<rect x="805.5" y="73.6" width="1" height="1"/><rect x="807.0" y="75.1" width="1" height="1"/><rect x="805.5" y="76.6" width="1" height="1"/>
<rect x="808.5" y="73.6" width="1" height="1"/><rect x="810.0" y="75.1" width="1" height="1"/><rect x="808.5" y="76.6" width="1" height="1"/>
<rect x="811.5" y="73.6" width="1" height="1"/><rect x="813.0" y="75.1" width="1" height="1"/><rect x="811.5" y="76.6" width="1" height="1"/>
<rect x="814.5" y="73.6" width="1" height="1"/><rect x="816.0" y="75.1" width="1" height="1"/><rect x="814.5" y="76.6" width="1" height="1"/>
<rect x="817.5" y="73.6" width="1" height="1"/><rect x="819.0" y="75.1" width="1" height="1"/><rect x="817.5" y="76.6" width="1" height="1"/>
<rect x="820.5" y="73.6" width="1" height="1"/><rect x="822.0" y="75.1" width="1" height="1"/><rect x="820.5" y="76.6" width="1" height="1"/>
<rect x="823.5" y="73.6" width="1" height="1"/><rect x="825.0" y="75.1" width="1" height="1"/><rect x="823.5" y="76.6" width="1" height="1"/>
<rect x="826.5" y="73.6" width="1" height="1"/><rect x="828.0" y="75.1" width="1" height="1"/><rect x="826.5" y="76.6" width="1" height="1"/>
<rect x="829.5" y="73.6" width="1" height="1"/><rect x="831.0" y="75.1" width="1" height="1"/><rect x="829.5" y="76.6" width="1" height="1"/>
<rect x="832.5" y="73.6" width="1" height="1"/><rect x="834.0" y="75.1" width="1" height="1"/><rect x="832.5" y="76.6" width="1" height="1"/>
<rect x="835.5" y="73.6" width="1" height="1"/><rect x="837.0" y="75.1" width="1" height="1"/><rect x="835.5" y="76.6" width="1" height="1"/>
<rect x="838.5" y="73.6" width="1" height="1"/><rect x="840.0" y="75.1" width="1" height="1"/><rect x="838.5" y="76.6" width="1" height="1"/>
<rect x="841.5" y="73.6" width="1" height="1"/><rect x="843.0" y="75.1" width="1" height="1"/><rect x="841.5" y="76.6" width="1" height="1"/>
<rect x="844.5" y="73.6" width="1" height="1"/><rect x="846.0" y="75.1" width="1" height="1"/><rect x="844.5" y="76.6" width="1" height="1"/>
<rect x="847.5" y="73.6" width="1" height="1"/><rect x="849.0" y="75.1" width="1" height="1"/><rect x="847.5" y="76.6" width="1" height="1"/>
<rect x="850.5" y="73.6" width="1" height="1"/><rect x="852.0" y="75.1" width="1" height="1"/><rect x="850.5" y="76.6" width="1" height="1"/>
<rect x="853.5" y="73.6" width="1" height="1"/><rect x="855.0" y="75.1" width="1" height="1"/><rect x="853.5" y="76.6" width="1" height="1"/>
<rect x="856.5" y="73.6" width="1" height="1"/><rect x="858.0" y="75.1" width="1" height="1"/><rect x="856.5" y="76.6" width="1" height="1"/>
<rect x="859.5" y="73.6" width="1" height="1"/><rect x="861.0" y="75.1" width="1" height="1"/><rect x="859.5" y="76.6" width="1" height="1"/>
<rect x="862.5" y="73.6" width="1" height="1"/><rect x="864.0" y="75.1" width="1" height="1"/><rect x="862.5" y="76.6" width="1" height="1"/>
<rect x="865.5" y="73.6" width="1" height="1"/><rect x="867.0" y="75.1" width="1" height="1"/><rect x="865.5" y="76.6" width="1" height="1"/>
<rect x="868.5" y="73.6" width="1" height="1"/><rect x="870.0" y="75.1" width="1" height="1"/><rect x="868.5" y="76.6" width="1" height="1"/>
<rect x="871.5" y="73.6" width="1" height="1"/><rect x="873.0" y="75.1" width="1" height="1"/><rect x="871.5" y="76.6" width="1" height="1"/>
<rect x="874.5" y="73.6" width="1" height="1"/><rect x="876.0" y="75.1" width="1" height="1"/><rect x="874.5" y="76.6" width="1" height="1"/>
<rect x="877.5" y="73.6" width="1" height="1"/><rect x="879.0" y="75.1" width="1" height="1"/><rect x="877.5" y="76.6" width="1" height="1"/>
<rect x="880.5" y="73.6" width="1" height="1"/><rect x="882.0" y="75.1" width="1" height="1"/><rect x="880.5" y="76.6" width="1" height="1"/>
<rect x="883.5" y="73.6" width="1" height="1"/><rect x="885.0" y="75.1" width="1" height="1"/><rect x="883.5" y="76.6" width="1" height="1"/>
<rect x="886.5" y="73.6" width="1" height="1"/><rect x="888.0" y="75.1" width="1" height="1"/><rect x="886.5" y="76.6" width="1" height="1"/>
<rect x="889.5" y="73.6" width="1" height="1"/><rect x="891.0" y="75.1" width="1" height="1"/><rect x="889.5" y="76.6" width="1" height="1"/>
<rect x="892.5" y="73.6" width="1" height="1"/><rect x="894.0" y="75.1" width="1" height="1"/><rect x="892.5" y="76.6" width="1" height="1"/>
<rect x="895.5" y="73.6" width="1" height="1"/><rect x="897.0" y="75.1" width="1" height="1"/><rect x="895.5" y="76.6" width="1" height="1"/>
<rect x="898.5" y="73.6" width="1" height="1"/><rect x="900.0" y="75.1" width="1" height="1"/><rect x="898.5" y="76.6" width="1" height="1"/>
<rect x="901.5" y="73.6" width="1" height="1"/><rect x="903.0" y="75.1" width="1" height="1"/><rect x="901.5" y="76.6" width="1" height="1"/>
<rect x="904.5" y="73.6" width="1" height="1"/><rect x="906.0" y="75.1" width="1" height="1"/><rect x="904.5" y="76.6" width="1" height="1"/>
<rect x="907.5" y="73.6" width="1" height="1"/><rect x="909.0" y="75.1" width="1" height="1"/><rect x="907.5" y="76.6" width="1" height="1"/>
<rect x="910.5" y="73.6" width="1" height="1"/><rect x="912.0" y="75.1" width="1" height="1"/><rect x="910.5" y="76.6" width="1" height="1"/>
<rect x="913.5" y="73.6" width="1" height="1"/><rect x="915.0" y="75.1" width="1" height="1"/><rect x="913.5" y="76.6" width="1" height="1"/>
<rect x="916.5" y="73.6" width="1" height="1"/><rect x="918.0" y="75.1" width="1" height="1"/><rect x="916.5" y="76.6" width="1" height="1"/>
<rect x="919.5" y="73.6" width="1" height="1"/><rect x="921.0" y="75.1" width="1" height="1"/><rect x="919.5" y="76.6" width="1" height="1"/>
<rect x="922.5" y="73.6" width="1" height="1"/><rect x="924.0" y="75.1" width="1" height="1"/><rect x="922.5" y="76.6" width="1" height="1"/>
<rect x="925.5" y="73.6" width="1" height="1"/><rect x="927.0" y="75.1" width="1" height="1"/><rect x="925.5" y="76.6" width="1" height="1"/>
<rect x="928.5" y="73.6" width="1" height="1"/><rect x="930.0" y="75.1" width="1" height="1"/><rect x="928.5" y="76.6" width="1" height="1"/>
<rect x="931.5" y="73.6" width="1" height="1"/><rect x="933.0" y="75.1" width="1" height="1"/><rect x="931.5" y="76.6" width="1" height="1"/>
<rect x="934.5" y="73.6" width="1" height="1"/><rect x="936.0" y="75.1" width="1" height="1"/><rect x="934.5" y="76.6" width="1" height="1"/>
<rect x="937.5" y="73.6" width="1" height="1"/><rect x="939.0" y="75.1" width="1" height="1"/><rect x="937.5" y="76.6" width="1" height="1"/>
<rect x="940.5" y="73.6" width="1" height="1"/><rect x="942.0" y="75.1" width="1" height="1"/><rect x="940.5" y="76.6" width="1" height="1"/>
<rect x="943.5" y="73.6" width="1" height="1"/><rect x="945.0" y="75.1" width="1" height="1"/><rect x="943.5" y="76.6" width="1" height="1"/>
<rect x="946.5" y="73.6" width="1" height="1"/><rect x="948.0" y="75.1" width="1" height="1"/><rect x="946.5" y="76.6" width="1" height="1"/>
<rect x="949.5" y="73.6" width="1" height="1"/><rect x="951.0" y="75.1" width="1" height="1"/><rect x="949.5" y="76.6" width="1" height="1"/>
<rect x="952.5" y="73.6" width="1" height="1"/><rect x="954.0" y="75.1" width="1" height="1"/><rect x="952.5" y="76.6" width="1" height="1"/>
<rect x="955.5" y="73.6" width="1" height="1"/><rect x="957.0" y="75.1" width="1" height="1"/><rect x="955.5" y="76.6" width="1" height="1"/>
<rect x="958.5" y="73.6" width="1" height="1"/><rect x="960.0" y="75.1" width="1" height="1"/><rect x="958.5" y="76.6" width="1" height="1"/>
<rect x="961.5" y="73.6" width="1" height="1"/><rect x="963.0" y="75.1" width="1" height="1"/><rect x="961.5" y="76.6" width="1" height="1"/>
<rect x="964.5" y="73.6" width="1" height="1"/><rect x="966.0" y="75.1" width="1" height="1"/><rect x="964.5" y="76.6" width="1" height="1"/>
<rect x="967.5" y="73.6" width="1" height="1"/><rect x="969.0" y="75.1" width="1" height="1"/><rect x="967.5" y="76.6" width="1" height="1"/>
<rect x="970.5" y="73.6" width="1" height="1"/><rect x="972.0" y="75.1" width="1" height="1"/><rect x="970.5" y="76.6" width="1" height="1"/>
<rect x="973.5" y="73.6" width="1" height="1"/><rect x="975.0" y="75.1" width="1" height="1"/><rect x="973.5" y="76.6" width="1" height="1"/>
</g>
<path d="M981,74.1 L986.8,74.1 L983.9,77.2 Z" fill="#ffffff"/>
<path d="M995,72.3 L998.5,72.3 M995.6,72.3 L995.6,77 M998,72.3 L998,77 M994,77 L999.6,77 M996.8,77 L996.8,80.2" fill="none" stroke="#ffffff" stroke-width="1"/>
<rect x="995.6" y="72.3" width="1.4" height="4.7" fill="#ffffff"/>
<line x1="1006.5" y1="72.7" x2="1013.2" y2="79" stroke="#ffffff" stroke-width="1.2"/>
<line x1="1013.2" y1="72.7" x2="1006.5" y2="79" stroke="#ffffff" stroke-width="1.2"/>
<rect x="740.8" y="83.7" width="277.2" height="22.3" fill="#eeeef2"/>
<path d="M749.9,97.4 Q746.2,94.6 747.4,91.9 Q749,89.4 752.4,90.5" fill="none" stroke="#1e72c4" stroke-width="1.7"/>
<path d="M751.6,89.8 L754.6,90.3 L754.2,93.3 Z" fill="#1e72c4"/>
<path d="M752.6,94.8 L757.1,97.4 L752.6,100 Z" fill="#333333"/>
<path d="M766.6,90.3 L765.3,90.3 L765.3,100.7 L766.6,100.7" fill="none" stroke="#333333" stroke-width="1.1"/>
<rect x="767.8" y="90.9" width="1.7" height="3.1" fill="#333333"/>
<rect x="767.8" y="96.4" width="1.7" height="3.1" fill="#333333"/>
<rect x="772.2" y="91.2" width="3.9" height="0.9" fill="#555555"/>
<rect x="772.2" y="93" width="3.9" height="0.9" fill="#555555"/>
<rect x="772.2" y="96.6" width="3.9" height="0.9" fill="#555555"/>
<rect x="772.2" y="98.4" width="3.9" height="0.9" fill="#555555"/>
<path d="M782,94.8 L785.8,94.8 L783.9,96.8 Z" fill="#717171"/>
<rect x="793" y="90.64999999999999" width="8.6" height="0.9" fill="#555555"/>
<circle cx="793" cy="91.1" r="1.15" fill="#333333"/><circle cx="801.6" cy="91.1" r="1.15" fill="#333333"/>
<rect x="793" y="94.45" width="8.6" height="0.9" fill="#555555"/>
<circle cx="793" cy="94.9" r="1.15" fill="#333333"/><circle cx="801.6" cy="94.9" r="1.15" fill="#333333"/>
<rect x="793" y="98.14999999999999" width="8.6" height="0.9" fill="#555555"/>
<circle cx="793" cy="98.6" r="1.15" fill="#333333"/><circle cx="801.6" cy="98.6" r="1.15" fill="#333333"/>
<rect x="809.5" y="86.9" width="208.5" height="14.6" fill="#ffffff" stroke="#e3e4ea" stroke-width="0.8"/>
<text x="812.8" y="97.8" font-size="10.04" fill="#717171" textLength="27.8" lengthAdjust="spacingAndGlyphs">Search</text>
<circle cx="1003.3" cy="92.6" r="2.8" fill="none" stroke="#424242" stroke-width="1.3"/>
<line x1="1001.3" y1="94.7" x2="998" y2="98" stroke="#424242" stroke-width="1.7" stroke-linecap="round"/>
<path d="M1011.4,93.3 L1015.0,93.3 L1013.1999999999999,95.1 Z" fill="#717171"/>
<rect x="740.4" y="106" width="278.0" height="4.8" fill="#ff0000"/>
<text x="748.4" y="122.6" font-size="10.04" fill="#0e70c0" textLength="29.6" lengthAdjust="spacingAndGlyphs">Run All</text>
<rect x="785" y="115.5" width="1.2" height="8.5" fill="#424242"/>
<text x="793.7" y="122.6" font-size="10.04" fill="#0e70c0" textLength="22.8" lengthAdjust="spacingAndGlyphs">Run...</text>
<path d="M820.6,119.6 L825.9,119.6 L823.25,122.3 Z" fill="#717171"/>
<rect x="834.8" y="115.5" width="1.2" height="8.5" fill="#424242"/>
<text x="843.4" y="122.6" font-size="10.04" fill="#0e70c0" textLength="70" lengthAdjust="spacingAndGlyphs">Playlist : All Tests</text>
<path d="M917,119.6 L923,119.6 L920.0,122.5 Z" fill="#717171"/>
<rect x="755" y="148.13" width="262.8" height="15.6" fill="#cccedb"/>
<path d="M751,138.1 L751,143.0 L745,143.0 Z" fill="#1e1e1e"/>
<text x="757.6" y="144.1" font-size="9.94" fill="#1e1e1e" textLength="50.5" lengthAdjust="spacingAndGlyphs" font-weight="bold">Failed Tests</text>
<text x="811.7" y="144.1" font-size="9.94" fill="#424242" textLength="10.8" lengthAdjust="spacingAndGlyphs">(1)</text>
<circle cx="762.6" cy="155.63" r="5.7" fill="#e51400"/>
<path d="M760.206,153.236 L764.994,158.024 M764.994,153.236 L760.206,158.024" fill="none" stroke="#ffffff" stroke-width="1.6"/>
<text x="771.7" y="160.03" font-size="9.94" fill="#1e1e1e" textLength="81" lengthAdjust="spacingAndGlyphs">T109_BellState_Test</text>
<text x="1016.3" y="160.03" font-size="9.94" fill="#1e1e1e" textLength="25" lengthAdjust="spacingAndGlyphs" text-anchor="end">33 ms</text>
<path d="M751,169.95999999999998 L751,174.85999999999999 L745,174.85999999999999 Z" fill="#1e1e1e"/>
<text x="757.6" y="175.95999999999998" font-size="9.94" fill="#1e1e1e" textLength="53.8" lengthAdjust="spacingAndGlyphs" font-weight="bold">Passed Tests</text>
<text x="815.0" y="175.95999999999998" font-size="9.94" fill="#424242" textLength="11.2" lengthAdjust="spacingAndGlyphs">(8)</text>
<circle cx="762.6" cy="187.48999999999998" r="5.7" fill="#339933"/>
<path d="M759.7,187.58999999999997 L761.7,189.89 L765.6,185.08999999999997" fill="none" stroke="#ffffff" stroke-width="1.7"/>
<text x="771.7" y="191.89" font-size="9.94" fill="#1e1e1e" textLength="92.7" lengthAdjust="spacingAndGlyphs">T101_IsQubitOne_Test</text>
<text x="1016.3" y="191.89" font-size="9.94" fill="#1e1e1e" textLength="29.8" lengthAdjust="spacingAndGlyphs" text-anchor="end">132 ms</text>
<circle cx="762.6" cy="203.42" r="5.7" fill="#339933"/>
<path d="M759.7,203.51999999999998 L761.7,205.82 L765.6,201.01999999999998" fill="none" stroke="#ffffff" stroke-width="1.7"/>
<text x="771.7" y="207.82" font-size="9.94" fill="#1e1e1e" textLength="92.1" lengthAdjust="spacingAndGlyphs">T102_IsQubitPlus_Test</text>
<text x="1016.3" y="207.82" font-size="9.94" fill="#1e1e1e" textLength="25" lengthAdjust="spacingAndGlyphs" text-anchor="end">15 ms</text>
<circle cx="762.6" cy="219.35" r="5.7" fill="#339933"/>
<path d="M759.7,219.45 L761.7,221.75 L765.6,216.95" fill="none" stroke="#ffffff" stroke-width="1.7"/>
<text x="771.7" y="223.75" font-size="9.94" fill="#1e1e1e" textLength="81.4" lengthAdjust="spacingAndGlyphs">T103_IsQubitA_Test</text>
<text x="1016.3" y="223.75" font-size="9.94" fill="#1e1e1e" textLength="29.8" lengthAdjust="spacingAndGlyphs" text-anchor="end">169 ms</text>
<circle cx="762.6" cy="235.28" r="5.7" fill="#339933"/>
<path d="M759.7,235.38 L761.7,237.68 L765.6,232.88" fill="none" stroke="#ffffff" stroke-width="1.7"/>
<text x="771.7" y="239.68" font-size="9.94" fill="#1e1e1e" textLength="128.4" lengthAdjust="spacingAndGlyphs">T104_ZeroZeroOrOneOne_Test</text>
<text x="1016.3" y="239.68" font-size="9.94" fill="#1e1e1e" textLength="25" lengthAdjust="spacingAndGlyphs" text-anchor="end">18 ms</text>
<circle cx="762.6" cy="251.20999999999998" r="5.7" fill="#339933"/>
<path d="M759.7,251.30999999999997 L761.7,253.60999999999999 L765.6,248.80999999999997" fill="none" stroke="#ffffff" stroke-width="1.7"/>
<text x="771.7" y="255.60999999999999" font-size="9.94" fill="#1e1e1e" textLength="143.8" lengthAdjust="spacingAndGlyphs">T105_BasisStateMeasurement_Test</text>
<text x="1016.3" y="255.60999999999999" font-size="9.94" fill="#1e1e1e" textLength="25" lengthAdjust="spacingAndGlyphs" text-anchor="end">21 ms</text>
<circle cx="762.6" cy="267.14" r="5.7" fill="#339933"/>
<path d="M759.7,267.24 L761.7,269.53999999999996 L765.6,264.74" fill="none" stroke="#ffffff" stroke-width="1.7"/>
<text x="771.7" y="271.53999999999996" font-size="9.94" fill="#1e1e1e" textLength="157.9" lengthAdjust="spacingAndGlyphs">T106_TwoBitstringsMeasurement_Test</text>
<text x="1016.3" y="271.53999999999996" font-size="9.94" fill="#1e1e1e" textLength="29.8" lengthAdjust="spacingAndGlyphs" text-anchor="end">104 ms</text>
<circle cx="762.6" cy="283.07000000000005" r="5.7" fill="#339933"/>
<path d="M759.7,283.1700000000001 L761.7,285.47 L765.6,280.6700000000001" fill="none" stroke="#ffffff" stroke-width="1.7"/>
<text x="771.7" y="287.47" font-size="9.94" fill="#1e1e1e" textLength="118.8" lengthAdjust="spacingAndGlyphs">T107_AllZerosOrWState_Test</text>
<text x="1016.3" y="287.47" font-size="9.94" fill="#1e1e1e" textLength="29.8" lengthAdjust="spacingAndGlyphs" text-anchor="end">285 ms</text>
<circle cx="762.6" cy="299.0" r="5.7" fill="#339933"/>
<path d="M759.7,299.1 L761.7,301.4 L765.6,296.6" fill="none" stroke="#ffffff" stroke-width="1.7"/>
<text x="771.7" y="303.4" font-size="9.94" fill="#1e1e1e" textLength="103.9" lengthAdjust="spacingAndGlyphs">T108_GHZOrWState_Test</text>
<text x="1016.3" y="303.4" font-size="9.94" fill="#1e1e1e" textLength="29.8" lengthAdjust="spacingAndGlyphs" text-anchor="end">366 ms</text>
<path d="M751,313.33 L751,318.22999999999996 L745,318.22999999999996 Z" fill="#1e1e1e"/>
<text x="757.6" y="319.33" font-size="9.94" fill="#717171" textLength="61" lengthAdjust="spacingAndGlyphs" font-weight="bold">Not Run Tests</text>
<text x="822.2" y="319.33" font-size="9.94" fill="#888888" textLength="11.2" lengthAdjust="spacingAndGlyphs">(4)</text>
<circle cx="762.6" cy="330.86" r="5.7" fill="#c5e3f6"/>
<rect x="761.8000000000001" y="327.26" width="1.6" height="4.6" fill="#ffffff"/>
<rect x="761.8000000000001" y="332.76" width="1.6" height="1.6" fill="#ffffff"/>
<text x="771.7" y="335.26" font-size="9.94" fill="#a2a4a5" textLength="106.2" lengthAdjust="spacingAndGlyphs">T110_TwoQubitState_Test</text>
<circle cx="762.6" cy="346.79" r="5.7" fill="#c5e3f6"/>
<rect x="761.8000000000001" y="343.19" width="1.6" height="4.6" fill="#ffffff"/>
<rect x="761.8000000000001" y="348.69" width="1.6" height="1.6" fill="#ffffff"/>
<text x="771.7" y="351.19" font-size="9.94" fill="#a2a4a5" textLength="139.1" lengthAdjust="spacingAndGlyphs">T111_TwoQubitStatePartTwo_Test</text>
<circle cx="762.6" cy="362.72" r="5.7" fill="#c5e3f6"/>
<rect x="761.8000000000001" y="359.12" width="1.6" height="4.6" fill="#ffffff"/>
<rect x="761.8000000000001" y="364.62" width="1.6" height="1.6" fill="#ffffff"/>
<text x="771.7" y="367.12" font-size="9.94" fill="#a2a4a5" textLength="121.3" lengthAdjust="spacingAndGlyphs">T201_IsQubitZeroOrPlus_Test</text>
<circle cx="762.6" cy="378.65" r="5.7" fill="#c5e3f6"/>
<rect x="761.8000000000001" y="375.04999999999995" width="1.6" height="4.6" fill="#ffffff"/>
<rect x="761.8000000000001" y="380.54999999999995" width="1.6" height="1.6" fill="#ffffff"/>
<text x="771.7" y="383.04999999999995" font-size="9.94" fill="#a2a4a5" textLength="167.7" lengthAdjust="spacingAndGlyphs">T202_IsQubitZeroOrPlusSimpleUSD_Test</text>
<rect x="740.8" y="459.6" width="277.2" height="3" fill="#e8e8ec"/>
<text x="748.3" y="479.3" font-size="11.12" fill="#1e1e1e" textLength="94.8" lengthAdjust="spacingAndGlyphs" font-weight="bold">T109_BellState_Test</text>
<text x="979.3" y="479.3" font-size="10.04" fill="#0e70c0" textLength="35.4" lengthAdjust="spacingAndGlyphs">Copy All</text>
<text x="769.7" y="498" font-size="10.04" fill="#1e1e1e" textLength="30.5" lengthAdjust="spacingAndGlyphs">Source:</text>
<text x="805.6" y="498" font-size="10.04" fill="#0e70c0" textLength="107.3" lengthAdjust="spacingAndGlyphs">TestSuiteRunner.cs line 31</text>
<circle cx="759.4" cy="514.6" r="5.4" fill="#e51400"/>
<path d="M757.132,512.332 L761.668,516.868 M761.668,512.332 L757.132,516.868" fill="none" stroke="#ffffff" stroke-width="1.6"/>
<text x="769.8" y="518.4" font-size="10.04" fill="#1e1e1e" textLength="132" lengthAdjust="spacingAndGlyphs">Test Failed - T109_BellState_Test</text>
<text x="774" y="535.4" font-size="10.04" fill="#1e1e1e" textLength="41.2" lengthAdjust="spacingAndGlyphs" font-weight="bold">Message:</text>
<text x="774" y="548" font-size="10.04" fill="#1e1e1e" textLength="219" lengthAdjust="spacingAndGlyphs" font-weight="bold">Microsoft.Quantum.Simulation.Core.ExecutionFai</text>
<text x="774" y="560.5" font-size="10.04" fill="#1e1e1e" textLength="201.3" lengthAdjust="spacingAndGlyphs" font-weight="bold">lException : 100 test runs out of 100 returned</text>
<text x="774" y="573" font-size="10.04" fill="#1e1e1e" textLength="66.4" lengthAdjust="spacingAndGlyphs" font-weight="bold">incorrect state.</text>
<text x="771.2" y="589.8" font-size="10.04" fill="#424242" textLength="105" lengthAdjust="spacingAndGlyphs">Elapsed time: 0:00:00.033</text>
<path d="M763,601 L763,606.2 L757.6,606.2 Z" fill="#1e1e1e"/>
<text x="769.7" y="607" font-size="10.04" fill="#1e1e1e" textLength="45.3" lengthAdjust="spacingAndGlyphs">StackTrace:</text>
<path d="M1007.5,511 L1014.5,511 L1011,507.3 Z" fill="#868999"/>
<rect x="1007.8" y="516" width="6.5" height="34.5" fill="#c2c3c9"/>
<path d="M1007.5,603.4 L1014.5,603.4 L1011,607.2 Z" fill="#868999"/>
<rect x="887.3" y="612.2" width="61.3" height="16.1" fill="#f5f5f5" stroke="#cccedb" stroke-width="0.8"/>
<rect x="887.7" y="611.6" width="60.5" height="1.4" fill="#f5f5f5"/>
<text x="744.1" y="624.5" font-size="10.04" fill="#1e1e1e" textLength="70.3" lengthAdjust="spacingAndGlyphs">Solution Explorer</text>
<text x="823.7" y="624.5" font-size="10.04" fill="#1e1e1e" textLength="58.8" lengthAdjust="spacingAndGlyphs">Team Explorer</text>
<text x="891.7" y="624.5" font-size="10.04" fill="#0e70c0" textLength="52.1" lengthAdjust="spacingAndGlyphs">Test Explorer</text>
<rect x="0" y="633.5" width="1024" height="18.5" fill="#007acc"/>
<path d="M4.5,639 L16,639 L14,647.6 L2.5,647.6 Z" fill="none" stroke="#ffffff" stroke-width="1.1"/>
<text x="22.3" y="646.3" font-size="10.37" fill="#ffffff" textLength="25" lengthAdjust="spacingAndGlyphs">Ready</text>
<path d="M771.5,647.7 L771.5,640.8 M768.2,644 L771.5,640.5 L774.8,644" fill="none" stroke="#ffffff" stroke-width="1.4"/>
<text x="782" y="646.3" font-size="10.37" fill="#ffffff">0</text>
<path d="M807,647.5 L807.4,645 L813.6,638.8 L815.7,640.9 L809.5,647.1 Z" fill="#ffffff"/>
<text x="821.6" y="646.3" font-size="10.37" fill="#ffffff">1</text>
<path d="M849.9,638.4 L855.6,644.1 L849.9,649.8 L844.2,644.1 Z" fill="#ffffff"/>
<path d="M847.7,640.9 L850.4,643.6 L850.4,647" fill="none" stroke="#007acc" stroke-width="0.9"/>
<circle cx="850.4" cy="643.6" r="0.95" fill="#007acc"/><circle cx="850.4" cy="647.2" r="0.95" fill="#007acc"/>
<text x="861" y="646.3" font-size="10.37" fill="#ffffff" textLength="58.2" lengthAdjust="spacingAndGlyphs">QuantumKata</text>
<path d="M939.2,641 L942.8,644.6 L946.4,641 M942.8,644.6 L942.8,648" fill="none" stroke="#ffffff" stroke-width="1.3"/>
<g fill="#007acc" stroke="#ffffff" stroke-width="1.1"><circle cx="938.8" cy="640.5" r="1.3"/><circle cx="946.8" cy="640.5" r="1.3"/></g>
<rect x="941.6" y="646.8" width="2.4" height="2" fill="#ffffff"/>
<text x="954.3" y="646.3" font-size="10.37" fill="#ffffff" textLength="28.2" lengthAdjust="spacingAndGlyphs">master</text>
<path d="M987,645.2 L993,645.2 L990,641.8 Z" fill="#ffffff"/>
<rect x="1020" y="644" width="1" height="1" fill="#7fbde6"/>
<rect x="1018" y="646" width="1" height="1" fill="#7fbde6"/>
<rect x="1020" y="646" width="1" height="1" fill="#7fbde6"/>
<rect x="1016" y="648" width="1" height="1" fill="#7fbde6"/>
<rect x="1018" y="648" width="1" height="1" fill="#7fbde6"/>
<rect x="1020" y="648" width="1" height="1" fill="#7fbde6"/>
</svg>
</body></html>
